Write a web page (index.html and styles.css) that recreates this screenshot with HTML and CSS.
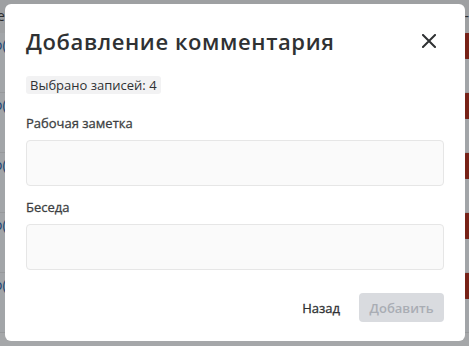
FILE: index.html
```html
<!DOCTYPE html>
<html lang="ru">
<head>
<meta charset="utf-8">
<link rel="stylesheet" href="styles.css">
</head>
<body>
<div class="page">
  <div class="page-top"><span class="page-top-text">е</span><span class="page-top-right">-</span></div>
  <div class="rows">
    <div class="row"><span class="row-link">о(</span><span class="row-badge"></span></div>
    <div class="row"><span class="row-link">о(</span><span class="row-badge"></span></div>
    <div class="row"><span class="row-link">о(</span><span class="row-badge"></span></div>
    <div class="row"><span class="row-link">о(</span><span class="row-badge"></span></div>
    <div class="row"><span class="row-link">о(</span><span class="row-badge"></span></div>
  </div>
</div>
<div class="overlay"></div>
<div class="modal">
  <div class="modal-head">
    <h1 class="modal-title">Добавление комментария</h1>
    <button class="close" aria-label="Закрыть">
      <svg width="14" height="14" viewBox="0 0 14 14"><path d="M1 1L13 13M13 1L1 13" stroke="#2f3133" stroke-width="2" stroke-linecap="square"/></svg>
    </button>
  </div>
  <div class="chip">Выбрано записей: 4</div>
  <div class="field">
    <label class="field-label">Рабочая заметка</label>
    <textarea class="field-input"></textarea>
  </div>
  <div class="field">
    <label class="field-label">Беседа</label>
    <textarea class="field-input"></textarea>
  </div>
  <div class="actions">
    <button class="btn-back">Назад</button>
    <button class="btn-add" disabled>Добавить</button>
  </div>
</div>
</body>
</html>
```
FILE: styles.css
```css
* { box-sizing: border-box; }
html, body { margin: 0; padding: 0; }
body {
  width: 469px;
  height: 346px;
  overflow: hidden;
  font-family: "Open Sans", "Liberation Sans", sans-serif;
  position: relative;
  background: #ffffff;
}
.page { width: 469px; height: 346px; overflow: hidden; }
.page-top {
  height: 33px;
  background: #f4f4f4;
  display: flex;
  justify-content: space-between;
  align-items: center;
  font-size: 14px;
  color: #333;
  padding-bottom: 2px;
}
.page-top-text { margin-left: -3px; }
.rows { display: flex; flex-direction: column; }
.row {
  height: 60px;
  display: flex;
  justify-content: space-between;
  align-items: flex-start;
  background: #fbfcfd;
  border-bottom: 1px solid #e8e8e8;
}
.row-link { color: #1a5fa8; font-size: 14px; margin-left: -6px; margin-top: 2px; }
.row-badge {
  width: 20px;
  height: 26px;
  margin-right: -14px;
  background: #b3220e;
  border-radius: 3px;
}
.overlay {
  position: absolute;
  inset: 0;
  background: rgba(30, 34, 40, 0.4);
}
.modal {
  position: absolute;
  left: 5px;
  top: 4px;
  width: 460px;
  height: 337px;
  background: #fff;
  border-radius: 6px;
  padding: 22px 21px 0 21px;
  display: flex;
  flex-direction: column;
}
.modal-head {
  display: flex;
  justify-content: space-between;
  align-items: center;
  height: 30px;
}
.modal-title {
  margin: 0;
  font-family: "Open Sans", sans-serif;
  font-weight: 600;
  font-size: 22px;
  color: #2f3133;
  letter-spacing: 0.6px;
}
.close {
  border: 0;
  background: none;
  padding: 0;
  width: 14px;
  height: 14px;
  margin-right: 8px;
  display: flex;
}
.chip {
  align-self: flex-start;
  margin-top: 20px;
  background: #f2f2f3;
  border-radius: 3px;
  font-size: 13px;
  color: #2f3133;
  padding: 0 4px;
  line-height: 18px;
}
.field { display: flex; flex-direction: column; margin-top: 20px; }
.field + .field { margin-top: 12px; }
.field-label {
  font-size: 13px;
  font-weight: 500;
  color: #3d3f42;
  -webkit-text-stroke: 0.3px #3d3f42;
  line-height: 18px;
  margin-bottom: 8px;
}
.field-input {
  height: 46px;
  width: 418px;
  resize: none;
  background: #fafafa;
  border: 1px solid #e6e6e6;
  border-radius: 4px;
  margin: 0;
}
.actions {
  display: flex;
  justify-content: flex-end;
  align-items: center;
  margin-top: 23px;
  gap: 19px;
}
.btn-back {
  border: 0;
  background: none;
  font-family: "Open Sans", sans-serif;
  font-size: 13px;
  font-weight: 500;
  color: #2f3133;
  -webkit-text-stroke: 0.3px #2f3133;
  padding: 0;
}
.btn-add {
  border: 0;
  width: 85px;
  height: 29px;
  border-radius: 4px;
  background: #d9dbdf;
  color: #a9adb4;
  font-family: "Open Sans", sans-serif;
  font-size: 13px;
  font-weight: 600;
  padding: 0;
}
```
